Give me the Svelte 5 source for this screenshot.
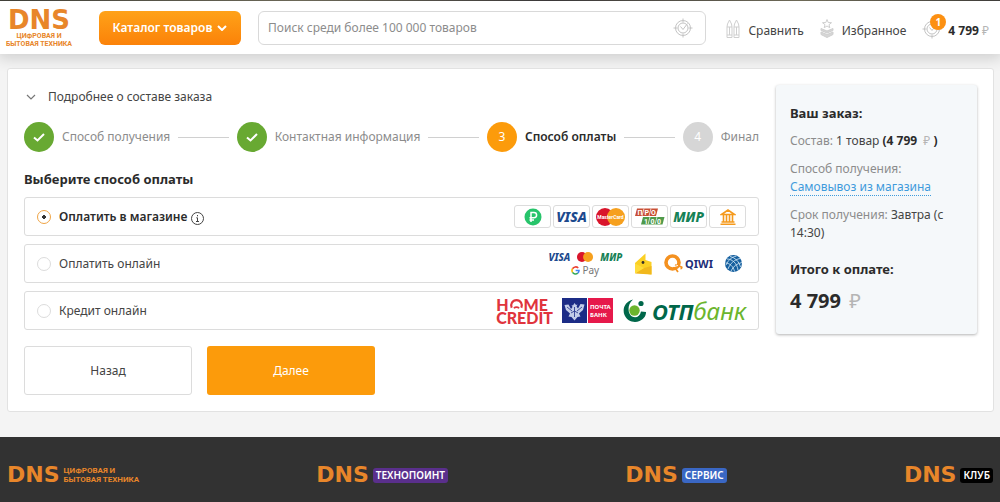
<script lang="ts">
  type Step = { label: string; state: 'done' | 'active' | 'next' };

  const steps: Step[] = [
    { label: 'Способ получения', state: 'done' },
    { label: 'Контактная информация', state: 'done' },
    { label: 'Способ оплаты', state: 'active' },
    { label: 'Финал', state: 'next' }
  ];

  const methods = [
    { id: 'store', label: 'Оплатить в магазине' },
    { id: 'online', label: 'Оплатить онлайн' },
    { id: 'credit', label: 'Кредит онлайн' }
  ];

  const brands = [
    { name: 'ТЕХНОПОИНТ', kind: 'techno' },
    { name: 'СЕРВИС', kind: 'service' },
    { name: 'КЛУБ', kind: 'club' }
  ];

  let selected = $state('store');
  let query = $state('');
</script>

{#snippet target()}
  <svg class="target" viewBox="0 0 20 20" aria-hidden="true">
    <circle cx="10" cy="10" r="7.5" />
    <circle cx="10" cy="10" r="5" />
    <path d="M10 0.5v4M10 15.5v4M0.5 10h4M15.5 10h4M7.5 8.5l2.5 3 4.5-6" />
  </svg>
{/snippet}

{#snippet mastercard()}
  <circle cx="10" cy="9" r="9" fill="#d9152b" />
  <circle cx="21" cy="9" r="9" fill="#f6a01e" />
{/snippet}

{#snippet storeLogos()}
  <div class="logos cards">
    <span class="pay-card">
      <svg width="18" height="18" viewBox="0 0 18 18">
        <circle cx="9" cy="9" r="8.5" fill="#27c46b" />
        <path d="M7 14V4.5h3a2.4 2.4 0 0 1 0 5.2H5.5M5.5 12H10" fill="none" stroke="#fff" stroke-width="1.5" />
      </svg>
    </span>
    <span class="pay-card visa">VISA</span>
    <span class="pay-card">
      <svg width="31" height="18" viewBox="0 0 31 18">
        {@render mastercard()}
        <text x="15.5" y="11" text-anchor="middle" class="mc-text">MasterCard</text>
      </svg>
    </span>
    <span class="pay-card">
      <svg width="30" height="17" viewBox="0 0 30 17">
        <path d="M2 0.5h21l-2 7.5H0z" fill="#c94f35" />
        <path d="M8 9h21.5l-2 7.5H6z" fill="#4f9a4b" />
        <path d="M9 0.5L7 8M16 0.5L14 8M15 9l-2 7.5M22 9l-2 7.5" stroke="#fff" stroke-width="0.7" />
        <text x="2.5" y="7" class="pro-text">П</text>
        <text x="9.5" y="7" class="pro-text">Р</text>
        <text x="16" y="7" class="pro-text">О</text>
        <text x="9" y="15.5" class="pro-text">1</text>
        <text x="15.5" y="15.5" class="pro-text">0</text>
        <text x="22" y="15.5" class="pro-text">0</text>
      </svg>
    </span>
    <span class="pay-card mir">МИР</span>
    <span class="pay-card">
      <svg width="16" height="16" viewBox="0 0 16 16" fill="none" stroke="#f59a1d" stroke-width="1.6">
        <path d="M1.5 5.5L8 1l6.5 4.5zM0.5 15.2h15M1.5 13h13M3.5 6v7M6.5 6v7M9.5 6v7M12.5 6v7" />
      </svg>
    </span>
  </div>
{/snippet}

{#snippet onlineLogos()}
  <div class="logos online">
    <div class="networks">
      <span class="visa small">VISA</span>
      <svg width="18" height="10" viewBox="0 0 31 18">{@render mastercard()}</svg>
      <span class="mir small">МИР</span>
      <span class="gpay">
        <svg width="9" height="9" viewBox="0 0 18 18" fill="none" stroke-width="3.2">
          <path d="M14.5 4A7.2 7.2 0 0 0 3 5.5" stroke="#ea4335" />
          <path d="M3 5.5a7.2 7.2 0 0 0 0 7.2" stroke="#fbbc05" />
          <path d="M3 12.7a7.2 7.2 0 0 0 10.5 1.7" stroke="#34a853" />
          <path d="M13.5 14.4A7 7 0 0 0 16 9H9.3" stroke="#4285f4" />
        </svg>
        Pay
      </span>
    </div>
    <svg class="wallet" width="18" height="22" viewBox="0 0 18 22">
      <path d="M1 10L11.5 0.5V7L17.5 9v12.5L1 19.5z" fill="#fbd024" />
      <path d="M1 20.5l9-5.5 7.5-2v8.5z" fill="#f1b81d" />
      <path d="M1 10.5l9 4.5L1 20.5z" fill="#ffdc3a" />
      <circle cx="9" cy="9.5" r="1.4" fill="#35302a" />
    </svg>
    <span class="qiwi">
      <svg width="19" height="19" viewBox="0 0 19 19">
        <circle cx="8.5" cy="8.5" r="6.5" fill="none" stroke="#f49120" stroke-width="3.6" />
        <path d="M11 11l6.5 2c0.5 0.5 0 1.5-1 1.5M11.5 14.5l2.5 3.5" stroke="#f49120" stroke-width="1.8" fill="none" />
        <path d="M10 12.5l4-1" stroke="#fff" stroke-width="1" />
      </svg>
      QIWI
    </span>
    <svg class="globe" width="19" height="19" viewBox="0 0 19 19">
      <circle cx="9.5" cy="9.5" r="8.5" fill="#16609f" />
      <g fill="none" stroke="#c8e0f1" stroke-width="0.9">
        <path d="M3 5c5 0 10 4 11 11M6 2.5c5 1 9 5 10.5 10.5M1.5 9c4 0 8 3.5 9 8.5" />
        <path d="M12.5 2c-5 1-8.5 4.5-10.5 9M16 4.5c-5.5 1-10 5-12 10.5M18 8.5c-5 1-9 4-11 8.5" />
      </g>
    </svg>
  </div>
{/snippet}

{#snippet creditLogos()}
  <div class="logos credit">
    <span class="home-credit">
      <span class="home-row">
        H<svg width="15" height="12" viewBox="0 0 14 11" fill="none" stroke="#e0343d" stroke-width="2">
          <path d="M2.5 9a5 5 0 1 1 9 0" />
          <path d="M4.5 9.5a3.5 3.5 0 0 1 5 0" stroke-width="1.5" />
        </svg>ME
      </span>
      <span>CREDIT</span>
    </span>
    <span class="pochta">
      <svg width="25" height="25" viewBox="0 0 25 25">
        <rect width="25" height="25" fill="#1c2c86" />
        <path
          d="M12.5 5l1.5 2 1.5-0.5-1 2 1.5 2 2.5-4.5 4 0.5-1.5 5.5-4 3.5 1.5 3-3 0.5-3 3.5-3-3.5-3-0.5 1.5-3-4-3.5L2.5 7l4-0.5L9 11l1.5-2-1-2 1.5 0.5z"
          fill="#c3cde8"
        />
        <path d="M5 9l5 4M20 9l-5 4M12.5 9v10M9 15l3.5-2 3.5 2" stroke="#1c2c86" stroke-width="0.8" fill="none" />
      </svg>
      <span class="pochta-name"><span>ПОЧТА</span><span>БАНК</span></span>
    </span>
    <span class="otp">
      <svg width="25" height="25" viewBox="0 0 25 25">
        <path d="M11 1.5C3 3.5 0 11 2.5 17s9.5 8.5 15 6 6.5-6 6.5-9l-5-0.5c-1 5-5 7-9 5S4.5 7 11 1.5z" fill="#00674a" />
        <circle cx="12.5" cy="12.5" r="5.2" fill="#6cb52d" />
        <circle cx="19" cy="5.5" r="2.6" fill="#00674a" />
      </svg>
      <span class="otp-name"><b>ОТП</b>банк</span>
    </span>
  </div>
{/snippet}

<div class="photo-strip"></div>
<header class="header">
  <a href="/" class="logo">
    <span class="dns">DNS</span>
    <span class="tagline">ЦИФРОВАЯ И<br />БЫТОВАЯ ТЕХНИКА</span>
  </a>
  <button type="button" class="catalog">
    Каталог товаров
    <svg width="10" height="6" viewBox="0 0 10 6" fill="none" stroke="currentColor" stroke-width="2">
      <path d="M1 1l4 4 4-4" />
    </svg>
  </button>
  <form class="search" role="search">
    <input
      type="text"
      bind:value={query}
      placeholder="Поиск среди более 100 000 товаров"
      aria-label="Поиск"
    />
    {@render target()}
  </form>
  <nav class="user-nav">
    <a href="/compare">
      <svg width="14" height="20" viewBox="0 0 14 20" class="nav-icon">
        <path d="M1 18.5V8l0.5-3L3.5 1l2 4L6 8v10.5zM8 18.5V8l0.5-3 2-4 2 4L13 8v10.5zM1 8h5M8 8h5M1 16h5M8 16h5M3.5 8v8M10.5 8v8" />
      </svg>
      Сравнить
    </a>
    <a href="/wishlist">
      <svg width="14" height="20" viewBox="0 0 14 20" class="nav-icon">
        <path d="M7 0.5l1.2 3 3.3 0.2-2.5 2 0.8 3L7 7 4.2 8.7l0.8-3-2.5-2 3.3-0.2z" />
        <path d="M1 9.5l6 2.5 6-2.5v2L7 14l-6-2.5zM1 13l6 2.5 6-2.5v2.5L7 18.5l-6-3z" fill="#d6d6d6" />
      </svg>
      Избранное
    </a>
    <a href="/cart" class="cart">
      <span class="cart-icon">
        {@render target()}
        <span class="badge">1</span>
      </span>
      <span><b>4 799</b> <span class="rub">₽</span></span>
    </a>
  </nav>
</header>

<main class="page">
  <div class="panel">
    <section class="checkout">
      <button type="button" class="details">
        <svg width="10" height="6" viewBox="0 0 10 6" fill="none" stroke="#777" stroke-width="1.2">
          <path d="M1 1l4 4 4-4" />
        </svg>
        Подробнее о составе заказа
      </button>

      <ol class="steps">
        {#each steps as step, i}
          <li class={step.state}>
            <span class="dot">
              {#if step.state === 'done'}
                <svg width="12" height="9" viewBox="0 0 12 9" fill="none" stroke="#fff" stroke-width="2">
                  <path d="M1 4.5l3.5 3L11 1" />
                </svg>
              {:else}
                {i + 1}
              {/if}
            </span>
            <span>{step.label}</span>
          </li>
        {/each}
      </ol>

      <h2>Выберите способ оплаты</h2>

      <div class="methods" role="radiogroup" aria-label="Способ оплаты">
        {#each methods as method}
          <div class="method">
            <label class:checked={selected === method.id}>
              <input type="radio" name="payment" value={method.id} bind:group={selected} />
              {method.label}
            </label>
            {#if method.id === 'store'}
              <button type="button" class="info" aria-label="Информация">
                <svg width="13" height="13" viewBox="0 0 13 13" fill="none" stroke="#444">
                  <circle cx="6.5" cy="6.5" r="6" />
                  <path d="M6.5 3v1.3M5.3 5.8h1.2v3.5M5 9.5h3" />
                </svg>
              </button>
              {@render storeLogos()}
            {:else if method.id === 'online'}
              {@render onlineLogos()}
            {:else}
              {@render creditLogos()}
            {/if}
          </div>
        {/each}
      </div>

      <div class="actions">
        <button type="button" class="back">Назад</button>
        <button type="button" class="next-btn">Далее</button>
      </div>
    </section>

    <aside class="order">
      <h3>Ваш заказ:</h3>
      <p><span class="muted">Состав:</span> 1 товар <b>(4 799 <span class="rub">₽</span> )</b></p>
      <p>
        <span class="muted">Способ получения:</span><br />
        <a href="/pickup">Самовывоз из магазина</a>
      </p>
      <p><span class="muted">Срок получения:</span> Завтра (с 14:30)</p>
      <h3 class="total-title">Итого к оплате:</h3>
      <div class="total">4 799 <span class="rub">₽</span></div>
    </aside>
  </div>
</main>

<footer class="footer">
  <a href="/" class="brand">
    <span class="dns">DNS</span>
    <span class="tagline">ЦИФРОВАЯ И<br />БЫТОВАЯ ТЕХНИКА</span>
  </a>
  {#each brands as brand}
    <a href="/{brand.kind}" class="brand">
      <span class="dns">DNS</span>
      <span class="chip {brand.kind}">{brand.name}</span>
    </a>
  {/each}
</footer>

<style>
  :global(body) {
    background: #f4f4f4;
    color: #444;
    font: 12px/18px 'Noto Sans', 'Open Sans', sans-serif;
  }

  button,
  input {
    font: inherit;
    color: inherit;
  }

  button {
    padding: 0;
    border: none;
    background: none;
    cursor: pointer;
  }

  a {
    color: inherit;
    text-decoration: none;
  }

  b {
    color: #2b2b2b;
  }

  svg {
    display: block;
    flex-shrink: 0;
  }

  .rub {
    color: #b5b5b5;
    font-weight: 400;
  }

  .order .rub {
    margin-left: 3px;
  }

  .muted {
    color: #8c8c8c;
  }

  .photo-strip {
    height: 1px;
    background: linear-gradient(90deg, #45443c, #75715f 30%, #3f3c3d 55%, #77735f 80%, #44423e);
  }

  .header {
    display: flex;
    align-items: center;
    box-sizing: border-box;
    height: 53px;
    padding: 0 11px 0 7px;
    background: #fff;
    box-shadow: 0 2px 14px 2px rgba(0, 0, 0, 0.16);
  }

  .dns {
    color: #e8862a;
    font-family: 'DejaVu Sans', sans-serif;
    font-weight: 700;
  }

  .tagline {
    color: #e8862a;
    font-family: Roboto, sans-serif;
    font-weight: 700;
    white-space: nowrap;
  }

  .logo {
    display: flex;
    flex-direction: column;
    align-items: center;
    width: 64px;
    margin-right: 28px;
  }

  .logo .dns {
    font-size: 26px;
    line-height: 24px;
  }

  .logo .tagline {
    font-size: 7px;
    line-height: 8px;
    text-align: center;
  }

  .catalog {
    display: flex;
    align-items: center;
    justify-content: center;
    gap: 5px;
    width: 142px;
    height: 34px;
    margin-right: 17px;
    border-radius: 6px;
    background: linear-gradient(#ffa218, #fb8209);
    color: #fff;
    font-weight: 600;
    white-space: nowrap;
  }

  .search {
    display: flex;
    flex: 1;
    align-items: center;
    box-sizing: border-box;
    height: 34px;
    padding: 0 12px 0 9px;
    border: 1px solid #d9d9d9;
    border-radius: 6px;
  }

  .search input {
    flex: 1;
    min-width: 0;
    padding: 0;
    border: none;
    outline: none;
    background: none;
  }

  .search input::placeholder {
    color: #8c8c8c;
  }

  .target {
    width: 20px;
    height: 20px;
    fill: none;
    stroke: #c4c4c4;
  }

  .user-nav {
    display: flex;
    gap: 16px;
    margin-left: 20px;
    padding-top: 7px;
  }

  .user-nav a {
    display: flex;
    align-items: center;
    gap: 8px;
    white-space: nowrap;
  }

  .nav-icon {
    margin-top: -5px;
    fill: none;
    stroke: #cfcfcf;
  }

  .user-nav .cart {
    gap: 6px;
  }

  .cart-icon {
    position: relative;
    margin-top: -5px;
  }

  .badge {
    position: absolute;
    top: -5px;
    right: -4px;
    width: 16px;
    height: 16px;
    border-radius: 50%;
    background: #fc9012;
    color: #fff;
    font-size: 10px;
    font-weight: 700;
    line-height: 16px;
    text-align: center;
  }

  .page {
    padding: 14px 6px 25px 7px;
  }

  .panel {
    display: grid;
    grid-template-columns: minmax(0, 1fr) 201px;
    align-items: start;
    gap: 17px;
    padding: 16px;
    border: 1px solid #e2e2e2;
    border-radius: 3px;
    background: #fff;
  }

  .details {
    display: flex;
    align-items: center;
    gap: 12px;
    margin: 3px 0 16px;
    padding-left: 2px;
  }

  .steps {
    display: flex;
    align-items: center;
    margin: 0;
    padding: 0;
    list-style: none;
    color: #8c8c8c;
    white-space: nowrap;
  }

  .steps li {
    display: flex;
    flex: 1 1 auto;
    align-items: center;
    gap: 8px;
  }

  .steps li:last-child {
    flex: none;
  }

  .steps li:not(:last-child)::after {
    content: '';
    flex: 1;
    height: 1px;
    margin-right: 8px;
    background: #d0d0d0;
  }

  .dot {
    display: flex;
    align-items: center;
    justify-content: center;
    width: 30px;
    height: 30px;
    border-radius: 50%;
    background: #d6d6d6;
    color: #fff;
    font-weight: 400;
  }

  .done .dot {
    background: #68a932;
  }

  .active {
    color: #2b2b2b;
    font-weight: 600;
  }

  .active .dot {
    background: #fc9b0b;
  }

  h2,
  h3 {
    margin: 0;
    color: #2b2b2b;
    font-size: 13px;
    line-height: 18px;
  }

  h2 {
    margin: 18px 0 9px;
  }

  .methods {
    display: grid;
    gap: 8px;
  }

  .method {
    display: flex;
    align-items: center;
    box-sizing: border-box;
    height: 39px;
    padding: 0 12px;
    border: 1px solid #dcdcdc;
    border-radius: 3px;
  }

  .method label {
    display: flex;
    align-items: center;
    gap: 8px;
    white-space: nowrap;
    cursor: pointer;
  }

  .method label.checked {
    color: #2b2b2b;
    font-weight: 600;
  }

  .method input {
    appearance: none;
    width: 14px;
    height: 14px;
    margin: 0;
    border: 1px solid #dcdcdc;
    border-radius: 50%;
  }

  .method input:checked {
    border-color: #efa445;
    background: radial-gradient(circle, #333 0 2px, transparent 2px);
  }

  .info {
    margin: 3px 0 0 4px;
  }

  .logos {
    display: flex;
    align-items: center;
    margin-left: auto;
    white-space: nowrap;
  }

  .cards {
    gap: 2px;
  }

  .pay-card {
    display: flex;
    align-items: center;
    justify-content: center;
    box-sizing: border-box;
    width: 37px;
    height: 23px;
    border: 1px solid #dcdcdc;
    border-radius: 3px;
  }

  .visa {
    color: #1c4a8e;
    font-size: 14px;
    font-style: italic;
    font-weight: 800;
  }

  .mir {
    color: #168156;
    font-size: 14px;
    font-style: italic;
    font-weight: 800;
  }

  .mc-text {
    fill: #fff;
    font-family: Roboto, sans-serif;
    font-size: 5px;
    font-weight: 700;
  }

  .pro-text {
    fill: #fff;
    font-family: Roboto, sans-serif;
    font-size: 7px;
    font-weight: 700;
  }

  .networks {
    display: grid;
    grid-template-columns: repeat(3, auto);
    align-items: center;
    column-gap: 6px;
    line-height: 13px;
  }

  .networks .small {
    font-size: 10px;
  }

  .gpay {
    display: flex;
    grid-column: 1 / -1;
    align-items: center;
    justify-content: center;
    gap: 2px;
    color: #777;
    font-size: 10px;
  }

  .wallet,
  .qiwi {
    margin-left: 12px;
  }

  .qiwi {
    display: flex;
    align-items: center;
    gap: 2px;
    color: #1d2d78;
    font-size: 11px;
    font-weight: 700;
  }

  .globe {
    margin: 0 3px 0 11px;
  }

  .credit {
    gap: 9px;
  }

  .home-credit {
    color: #e0343d;
    font-family: Lato, sans-serif;
    font-size: 16px;
    font-weight: 900;
    line-height: 13px;
  }

  .home-credit span,
  .pochta-name span {
    display: block;
  }

  .home-credit .home-row {
    display: flex;
    align-items: center;
  }

  .pochta {
    display: flex;
    gap: 1px;
  }

  .pochta-name {
    box-sizing: border-box;
    width: 25px;
    height: 25px;
    padding: 5px 2px;
    background: #e6194b;
    color: #fff;
    font-size: 6px;
    font-weight: 700;
    line-height: 8px;
  }

  .otp {
    display: flex;
    align-items: center;
    gap: 5px;
  }

  .otp-name {
    color: #6cb52d;
    font-size: 24px;
    font-style: italic;
    line-height: 25px;
  }

  .otp-name b {
    color: #00674a;
    font-size: 22px;
  }

  .actions {
    display: flex;
    gap: 15px;
    margin-top: 16px;
  }

  .actions button {
    box-sizing: border-box;
    width: 168px;
    height: 49px;
    border-radius: 3px;
  }

  .back {
    border: 1px solid #dcdcdc;
  }

  .next-btn {
    background: #fc9b0b;
    color: #fff;
  }

  .order {
    box-sizing: border-box;
    min-height: 249px;
    padding: 19px 14px 18px;
    border-radius: 3px;
    background: #f5f8fa;
    box-shadow: 0 1px 3px rgba(0, 0, 0, 0.3);
  }

  .order p {
    margin: 10px 0;
  }

  .order a {
    border-bottom: 1px dotted #3f9bdc;
    color: #3f9bdc;
  }

  .order .total-title {
    margin-top: 18px;
  }

  .total {
    margin-top: 12px;
    color: #2b2b2b;
    font-size: 20px;
    font-weight: 700;
    line-height: 22px;
  }

  .footer {
    display: flex;
    justify-content: space-between;
    padding: 28px 7px 17px;
    background: #323232;
  }

  .brand {
    display: flex;
    align-items: center;
    gap: 4px;
    height: 20px;
  }

  .brand .dns {
    font-size: 22px;
    line-height: 20px;
  }

  .brand .tagline {
    font-size: 8px;
    line-height: 9px;
  }

  .chip {
    padding: 0 3px;
    border-radius: 3px;
    color: #fff;
    font-size: 10px;
    font-weight: 600;
    line-height: 15px;
  }

  .techno {
    background: #5a2f8c;
  }

  .service {
    background: #3a67c4;
  }

  .club {
    background: #000;
  }
</style>
